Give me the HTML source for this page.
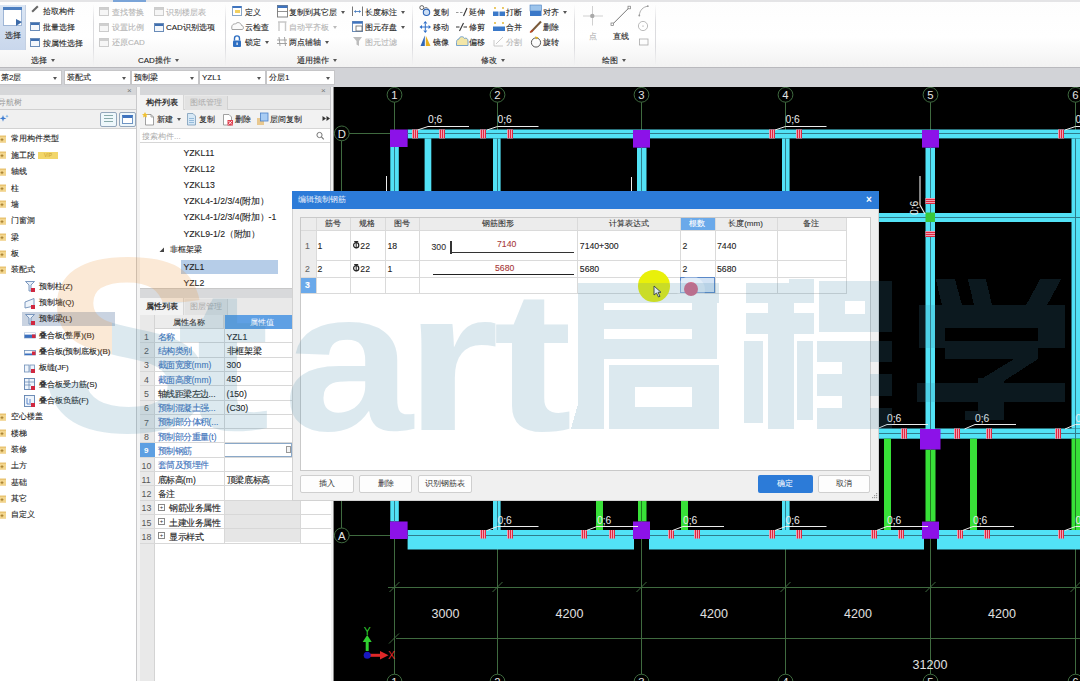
<!DOCTYPE html>
<html><head><meta charset="utf-8">
<style>
*{margin:0;padding:0;box-sizing:border-box}
html,body{width:1080px;height:681px;overflow:hidden;background:#fff}
body{position:relative;font-family:"Liberation Sans",sans-serif;font-size:8px;color:#222}
.a{position:absolute}
.t{position:absolute;white-space:nowrap;line-height:1;font-size:8px}
.g{color:#b4b4b4}
.d{-webkit-text-stroke:0.1px currentColor}
#ribbon{left:0;top:0;width:1080px;height:68px;background:linear-gradient(#fdfdfd 0%,#ffffff 55%,#f2f2f2 100%);border-bottom:1px solid #b9b9bd}
.sep{position:absolute;top:4px;width:1px;height:62px;background:linear-gradient(rgba(220,220,222,0),#dcdcdf 30%,#dcdcdf 70%,rgba(220,220,222,0))}
#tb{left:0;top:68px;width:1080px;height:19px;background:#d2d3d7}
.dd{position:absolute;top:70px;height:15px;background:#fff;border:1px solid #c6c6c8}
.dd .t{left:2px;top:3px}
.dd i{position:absolute;right:4px;top:6px;width:0;height:0;border-left:2.5px solid transparent;border-right:2.5px solid transparent;border-top:3px solid #555}
.ic{position:absolute;width:10px;height:9px;border:1px solid #6a8cb8;background:#f4f7fb}
.ic:before{content:"";position:absolute;left:0;top:0;right:0;height:2px;background:#3f6fb0}
.icg:before{background:#cfcfcf}
.c{display:inline-block;width:1em;text-align:center}
.arr{display:inline-block;width:0;height:0;border-left:2.5px solid transparent;border-right:2.5px solid transparent;border-top:3px solid #555;margin-left:4px;vertical-align:middle}
</style></head><body>

<!-- RIBBON -->
<div id="ribbon" class="a">
  <div class="a" style="left:0;top:0;width:1080px;height:1.5px;background:#e4e4e6"></div>
  <div class="a" style="left:113px;top:0;width:33px;height:1.5px;background:#7aa4d8"></div>
  <!-- select big button -->
  <div class="a" style="left:0;top:5px;width:26px;height:45px;background:linear-gradient(#dbe6f4,#c9d7ec);border-right:1px solid #c4d0e2"></div>
  <div class="a" style="left:3px;top:7px;width:19px;height:19px;background:#fff;border:1px solid #9fb6d6"></div>
  <div class="a" style="left:3px;top:7px;width:19px;height:3px;background:#4d7fc0"></div>
  <div class="a" style="left:16px;top:19px;width:0;height:0;border-left:6px solid #3c6aa8;border-top:3px solid transparent;border-bottom:4px solid transparent"></div>
  <div class="t d" style="left:5px;top:32px;font-size:8px"><span class="c">选</span><span class="c">择</span></div>
  <div class="a" style="left:31px;top:8px;width:8px;height:2px;background:#666;transform:rotate(-45deg)"></div>
  <div class="t d" style="left:43px;top:7.5px"><span class="c">拾</span><span class="c">取</span><span class="c">构</span><span class="c">件</span></div>
  <div class="ic" style="left:30px;top:22px"></div>
  <div class="t d" style="left:43px;top:23.5px"><span class="c">批</span><span class="c">量</span><span class="c">选</span><span class="c">择</span></div>
  <div class="ic" style="left:30px;top:38px"></div>
  <div class="t d" style="left:43px;top:39.5px"><span class="c">按</span><span class="c">属</span><span class="c">性</span><span class="c">选</span><span class="c">择</span></div>
  <div class="t d" style="left:31px;top:56.5px"><span class="c">选</span><span class="c">择</span><span class="arr"></span></div>
  <div class="sep" style="left:93px"></div>

  <div class="ic icg" style="left:99px;top:7px;border-color:#ccc;background:#f6f6f6"></div>
  <div class="t g d" style="left:112px;top:8.5px"><span class="c">查</span><span class="c">找</span><span class="c">替</span><span class="c">换</span></div>
  <div class="ic icg" style="left:99px;top:23px;border-color:#ccc;background:#f6f6f6"></div>
  <div class="t g d" style="left:112px;top:23.5px"><span class="c">设</span><span class="c">置</span><span class="c">比</span><span class="c">例</span></div>
  <div class="ic icg" style="left:99px;top:38px;border-color:#ccc;background:#f6f6f6"></div>
  <div class="t g d" style="left:112px;top:38.5px"><span class="c">还</span><span class="c">原</span>CAD</div>
  <div class="ic icg" style="left:154px;top:7px;border-color:#ccc;background:#f6f6f6"></div>
  <div class="t g d" style="left:166px;top:8.5px"><span class="c">识</span><span class="c">别</span><span class="c">楼</span><span class="c">层</span><span class="c">表</span></div>
  <div class="ic" style="left:154px;top:23px"></div>
  <div class="t d" style="left:166px;top:23.5px">CAD<span class="c">识</span><span class="c">别</span><span class="c">选</span><span class="c">项</span></div>
  <div class="t d" style="left:138px;top:56.5px">CAD<span class="c">操</span><span class="c">作</span><span class="arr"></span></div>
  <div class="sep" style="left:225px"></div>

  <div class="t d" style="left:245px;top:8.5px"><span class="c">定</span><span class="c">义</span></div>
  <div class="t d" style="left:245px;top:23.5px"><span class="c">云</span><span class="c">检</span><span class="c">查</span></div>
  <div class="t d" style="left:245px;top:38.5px"><span class="c">锁</span><span class="c">定</span><span class="arr"></span></div>
  <div class="t d" style="left:289px;top:8.5px"><span class="c">复</span><span class="c">制</span><span class="c">到</span><span class="c">其</span><span class="c">它</span><span class="c">层</span><span class="arr"></span></div>
  <div class="t g d" style="left:289px;top:23.5px"><span class="c">自</span><span class="c">动</span><span class="c">平</span><span class="c">齐</span><span class="c">板</span><span class="arr" style="border-top-color:#bbb"></span></div>
  <div class="t d" style="left:289px;top:38.5px"><span class="c">两</span><span class="c">点</span><span class="c">辅</span><span class="c">轴</span><span class="arr"></span></div>
  <div class="t d" style="left:365px;top:8.5px"><span class="c">长</span><span class="c">度</span><span class="c">标</span><span class="c">注</span><span class="arr"></span></div>
  <div class="t d" style="left:365px;top:23.5px"><span class="c">图</span><span class="c">元</span><span class="c">存</span><span class="c">盘</span><span class="arr"></span></div>
  <div class="t g d" style="left:365px;top:38.5px"><span class="c">图</span><span class="c">元</span><span class="c">过</span><span class="c">滤</span></div>
  <svg class="a" style="left:228px;top:0" width="140" height="50" viewBox="228 0 140 50">
    <rect x="232.5" y="6.5" width="9" height="9" fill="#fff" stroke="#8aa6c8" stroke-width="1"/>
    <rect x="232.5" y="6" width="9" height="2" fill="#3f74bf"/>
    <rect x="235" y="10" width="5" height="3" fill="#f2d060"/>
    <path d="M232 29.5 H242 C244 29.5 244 25.5 241.5 25.5 C241 22.5 237 21.5 235.5 24 C233 23.5 231 25.5 232 29.5 Z" fill="#fbfbfb" stroke="#9a9a9a" stroke-width="0.9"/>
    <path d="M234.5 40.5 V38.5 C234.5 35 239.5 35 239.5 38.5 V40.5" fill="none" stroke="#2f6fc2" stroke-width="1.4"/>
    <rect x="233" y="40.5" width="8" height="6.5" rx="1" fill="#2f6fc2"/>
    <rect x="236.5" y="42.5" width="1.2" height="2.5" fill="#fff"/>
    <rect x="277.5" y="5.5" width="10" height="11.5" fill="#fff" stroke="#777" stroke-width="0.9"/>
    <rect x="277.5" y="5.5" width="10" height="2.5" fill="#3f74bf"/>
    <path d="M277.5 11.5 H287.5" stroke="#777" stroke-width="0.8"/>
    <path d="M279 22 V31 M285.5 22 V31 M278 22 H286.5" stroke="#c8c8c8" stroke-width="1.4" fill="none"/>
    <path d="M279 37 L280 46 M284.5 37 L285.5 46 M277 40 H287 M277 43.5 H287" stroke="#999" stroke-width="0.9"/>
    <path d="M352.5 6.5 V16 M362.5 6.5 V16" stroke="#666" stroke-width="0.9"/>
    <path d="M354.5 11.5 H360.5" stroke="#4b7fc0" stroke-width="0.9"/>
    <path d="M354 11.5 L356 10 V13 Z M361 11.5 L359 10 V13 Z" fill="#4b7fc0"/>
    <rect x="352.5" y="21.5" width="10" height="10" fill="#fff" stroke="#6a8cb8" stroke-width="1"/>
    <rect x="352.5" y="21.5" width="10" height="2.2" fill="#3f74bf"/>
    <rect x="356" y="26" width="6" height="5" fill="#fff" stroke="#666" stroke-width="0.8"/>
    <path d="M353 37 H362 L359 41 V46 L356.5 44.5 V41 Z" fill="#bdbdbd"/>
  </svg>
  <div class="t d" style="left:297px;top:56.5px"><span class="c">通</span><span class="c">用</span><span class="c">操</span><span class="c">作</span><span class="arr"></span></div>
  <div class="sep" style="left:412px"></div>

  <div class="t d" style="left:433px;top:8.5px"><span class="c">复</span><span class="c">制</span></div>
  <div class="t d" style="left:433px;top:23.5px"><span class="c">移</span><span class="c">动</span></div>
  <div class="t d" style="left:433px;top:38.5px"><span class="c">镜</span><span class="c">像</span></div>
  <div class="t d" style="left:469px;top:8.5px"><span class="c">延</span><span class="c">伸</span></div>
  <div class="t d" style="left:469px;top:23.5px"><span class="c">修</span><span class="c">剪</span></div>
  <div class="t d" style="left:469px;top:38.5px"><span class="c">偏</span><span class="c">移</span></div>
  <div class="t d" style="left:506px;top:8.5px"><span class="c">打</span><span class="c">断</span></div>
  <div class="t d" style="left:506px;top:23.5px"><span class="c">合</span><span class="c">并</span></div>
  <div class="t g d" style="left:506px;top:38.5px"><span class="c">分</span><span class="c">割</span></div>
  <div class="t d" style="left:543px;top:8.5px"><span class="c">对</span><span class="c">齐</span><span class="arr"></span></div>
  <div class="t d" style="left:543px;top:23.5px"><span class="c">删</span><span class="c">除</span></div>
  <div class="t d" style="left:543px;top:38.5px"><span class="c">旋</span><span class="c">转</span></div>
  <svg class="a" style="left:415px;top:0" width="135" height="50" viewBox="415 0 135 50">
    <circle cx="421.8" cy="7.6" r="2" fill="none" stroke="#555" stroke-width="0.9"/>
    <circle cx="426.5" cy="12.3" r="3.2" fill="#cfe0f4" stroke="#2f66b8" stroke-width="1.1"/>
    <path d="M424 8.5 L426 7.2 L428.5 8.8" fill="none" stroke="#777" stroke-width="0.8"/>
    <path d="M425.3 21 L427.3 23.5 L423.3 23.5 Z M425.3 33 L427.3 30.5 L423.3 30.5 Z M419.5 27 L422 25 L422 29 Z M431 27 L428.5 25 L428.5 29 Z" fill="#2f6fc8"/>
    <path d="M425.3 23.5 V30.5 M422 27 H428.5" stroke="#2f6fc8" stroke-width="1"/>
    <path d="M424.8 35.5 L420.5 46 L424.8 46 Z" fill="#2f66b8"/>
    <path d="M425.8 35.5 L430.5 46 L425.8 46 Z" fill="#e8b020"/>
    <path d="M456 12.5 H458.5 M460 12.5 H462.5" stroke="#999" stroke-width="1"/>
    <path d="M463.5 16 L467 8" stroke="#333" stroke-width="1.1"/>
    <path d="M456 27 H459.5 M463.5 27 H467" stroke="#333" stroke-width="1"/>
    <path d="M459.5 31 L463.5 23" stroke="#333" stroke-width="1.1"/>
    <path d="M456.5 45.5 H468 V41 C468 38.5 466 37.5 464.5 38.5 C463.5 36 459.5 36 459 39 C457 39 456.5 41 456.5 42.5 Z" fill="#f2e6a8" stroke="#6a9ac8" stroke-width="0.9"/>
    <rect x="493" y="11.5" width="5.5" height="4.5" fill="#3a78c8"/><rect x="499.5" y="11.5" width="5.5" height="4.5" fill="#3a78c8"/>
    <circle cx="495" cy="8" r="0.9" fill="#e0b020"/><circle cx="503" cy="8" r="0.9" fill="#e0b020"/>
    <rect x="493" y="26.5" width="12" height="4.5" fill="#3a78c8"/>
    <circle cx="495" cy="23" r="0.9" fill="#e0b020"/><circle cx="503" cy="23" r="0.9" fill="#e0b020"/>
    <path d="M494 46 H503 M494 46 V40 M496 44 L503 37" stroke="#c4c4c4" stroke-width="0.9" fill="none"/>
    <rect x="530" y="5" width="11.5" height="6" fill="#9cc4ec" stroke="#4a7fc0" stroke-width="0.6"/>
    <rect x="530" y="11" width="11.5" height="5" fill="#3a78c8"/>
    <path d="M531 32 L541 21.5" stroke="#7a5a3a" stroke-width="2"/>
    <path d="M530 32.5 L533 30" stroke="#c04020" stroke-width="1.4"/>
    <circle cx="536" cy="42.5" r="4.6" fill="none" stroke="#444" stroke-width="0.9"/>
    <path d="M535 36.5 L538.5 37.2 L536 39.5 Z" fill="#e0b020"/>
  </svg>
  <div class="t d" style="left:481px;top:56.5px"><span class="c">修</span><span class="c">改</span><span class="arr"></span></div>
  <div class="sep" style="left:574px"></div>

  <div class="t g d" style="left:589px;top:32.5px"><span class="c">点</span></div>
  <div class="t d" style="left:613px;top:32.5px"><span class="c">直</span><span class="c">线</span></div>
  <svg class="a" style="left:575px;top:0" width="80" height="50" viewBox="575 0 80 50">
    <path d="M583 16 H603 M592.5 6 V25.5" stroke="#d0d0d0" stroke-width="1"/>
    <circle cx="592.3" cy="15.9" r="2.2" fill="#a8a8a8"/>
    <path d="M612.5 24.3 L629.3 7.5" stroke="#666" stroke-width="0.9"/>
    <rect x="611" y="23" width="2.6" height="2.6" fill="#fff" stroke="#777" stroke-width="0.7"/>
    <rect x="628" y="6.2" width="2.6" height="2.6" fill="#fff" stroke="#777" stroke-width="0.7"/>
    <path d="M639.3 15.5 C639.8 10 643 7 647.8 6.2" fill="none" stroke="#999" stroke-width="0.8"/>
    <circle cx="639.3" cy="15.5" r="0.9" fill="#999"/><circle cx="647.8" cy="6.2" r="0.9" fill="#999"/>
    <circle cx="643" cy="26" r="4.6" fill="none" stroke="#aaa" stroke-width="0.8"/>
    <circle cx="643" cy="26" r="0.6" fill="#888"/>
    <rect x="639.5" y="39" width="8.5" height="6" fill="none" stroke="#aaa" stroke-width="0.8"/>
  </svg>
  <div class="t d" style="left:602px;top:56.5px"><span class="c">绘</span><span class="c">图</span><span class="arr"></span></div>
  <div class="sep" style="left:655px"></div>
</div>

<!-- TOOLBAR -->
<div id="tb" class="a"></div>
<div class="dd" style="left:-2px;width:64px"><span class="t d"><span class="c">第</span>2<span class="c">层</span></span><i></i></div>
<div class="dd" style="left:64px;width:67px"><span class="t d"><span class="c">装</span><span class="c">配</span><span class="c">式</span></span><i></i></div>
<div class="dd" style="left:131px;width:68px"><span class="t d"><span class="c">预</span><span class="c">制</span><span class="c">梁</span></span><i></i></div>
<div class="dd" style="left:199px;width:67px"><span class="t d">YZL1</span><i></i></div>
<div class="dd" style="left:266px;width:69px"><span class="t d"><span class="c">分</span><span class="c">层</span>1</span><i></i></div>

<!-- LEFT -->
<div class="a" style="left:0;top:87px;width:137px;height:594px;background:#fff;border-right:1px solid #c9c9cb"></div>
<div class="a" style="left:0;top:87px;width:136px;height:8px;background:#d6d7d9"></div>
<div class="t" style="left:127px;top:87px;color:#777;font-size:8px">×</div>
<div class="a" style="left:0;top:95px;width:136px;height:15px;background:#efefef;border-bottom:1px solid #d0d0d0"></div>
<div class="t" style="left:-2px;top:98.5px;color:#9a9a9a"><span class="c">导</span><span class="c">航</span><span class="c">树</span></div>
<div class="a" style="left:0;top:110px;width:136px;height:19px;background:#f0f0f0;border-bottom:1px solid #d2d2d2"></div>
<svg class="a" style="left:0;top:114px" width="9" height="9" viewBox="0 0 9 9"><path d="M3 1 L3.8 3.6 L6.4 4.4 L3.8 5.2 L3 7.8 L2.2 5.2 L-0.4 4.4 L2.2 3.6 Z" fill="#3a7ad0"/><path d="M7 0.5 L7.4 1.8 L8.7 2.2 L7.4 2.6 L7 3.9 L6.6 2.6 L5.3 2.2 L6.6 1.8 Z" fill="#5aa0e0"/></svg>
<div class="a" style="left:100px;top:112px;width:17px;height:15px;border:1px solid #93a6bb;border-radius:2px;background:#eef7fb"></div>
<div class="a" style="left:104px;top:115px;width:9px;height:1px;background:#8aa;box-shadow:0 3px 0 #8aa,0 6px 0 #8aa"></div>
<div class="a" style="left:119px;top:112px;width:17px;height:15px;border:1px solid #93a6bb;border-radius:2px;background:#eef7fb"></div>
<div class="a" style="left:122px;top:115px;width:11px;height:9px;background:#fff;border:1px solid #6f95c4;border-top:3px solid #3f74bf"></div>
<svg class="a" style="left:0;top:134.0px" width="8" height="9" viewBox="0 0 8 9"><rect x="-2" y="1.5" width="8" height="7" fill="#e9c472"/><rect x="-2" y="3" width="8" height="5.5" fill="#f3d68e"/><path d="M0.5 5.7 H3.5 M2 4.2 V7.2" stroke="#9a7020" stroke-width="0.8"/></svg>
<div class="t d" style="left:10.5px;top:135.4px"><span class="c">常</span><span class="c">用</span><span class="c">构</span><span class="c">件</span><span class="c">类</span><span class="c">型</span></div>
<svg class="a" style="left:0;top:150.3px" width="8" height="9" viewBox="0 0 8 9"><rect x="-2" y="1.5" width="8" height="7" fill="#e9c472"/><rect x="-2" y="3" width="8" height="5.5" fill="#f3d68e"/><path d="M0.5 5.7 H3.5 M2 4.2 V7.2" stroke="#9a7020" stroke-width="0.8"/></svg>
<div class="t d" style="left:10.5px;top:151.8px"><span class="c">施</span><span class="c">工</span><span class="c">段</span></div>
<div class="a" style="left:38px;top:151.8px;width:20px;height:7px;background:#f2d66a;color:#c9a030;font-size:5px;line-height:7px;text-align:center">VIP</div>
<svg class="a" style="left:0;top:166.7px" width="8" height="9" viewBox="0 0 8 9"><rect x="-2" y="1.5" width="8" height="7" fill="#e9c472"/><rect x="-2" y="3" width="8" height="5.5" fill="#f3d68e"/><path d="M0.5 5.7 H3.5 M2 4.2 V7.2" stroke="#9a7020" stroke-width="0.8"/></svg>
<div class="t d" style="left:10.5px;top:168.1px"><span class="c">轴</span><span class="c">线</span></div>
<svg class="a" style="left:0;top:183.1px" width="8" height="9" viewBox="0 0 8 9"><rect x="-2" y="1.5" width="8" height="7" fill="#e9c472"/><rect x="-2" y="3" width="8" height="5.5" fill="#f3d68e"/><path d="M0.5 5.7 H3.5 M2 4.2 V7.2" stroke="#9a7020" stroke-width="0.8"/></svg>
<div class="t d" style="left:10.5px;top:184.5px"><span class="c">柱</span></div>
<svg class="a" style="left:0;top:199.4px" width="8" height="9" viewBox="0 0 8 9"><rect x="-2" y="1.5" width="8" height="7" fill="#e9c472"/><rect x="-2" y="3" width="8" height="5.5" fill="#f3d68e"/><path d="M0.5 5.7 H3.5 M2 4.2 V7.2" stroke="#9a7020" stroke-width="0.8"/></svg>
<div class="t d" style="left:10.5px;top:200.8px"><span class="c">墙</span></div>
<svg class="a" style="left:0;top:215.8px" width="8" height="9" viewBox="0 0 8 9"><rect x="-2" y="1.5" width="8" height="7" fill="#e9c472"/><rect x="-2" y="3" width="8" height="5.5" fill="#f3d68e"/><path d="M0.5 5.7 H3.5 M2 4.2 V7.2" stroke="#9a7020" stroke-width="0.8"/></svg>
<div class="t d" style="left:10.5px;top:217.2px"><span class="c">门</span><span class="c">窗</span><span class="c">洞</span></div>
<svg class="a" style="left:0;top:232.1px" width="8" height="9" viewBox="0 0 8 9"><rect x="-2" y="1.5" width="8" height="7" fill="#e9c472"/><rect x="-2" y="3" width="8" height="5.5" fill="#f3d68e"/><path d="M0.5 5.7 H3.5 M2 4.2 V7.2" stroke="#9a7020" stroke-width="0.8"/></svg>
<div class="t d" style="left:10.5px;top:233.5px"><span class="c">梁</span></div>
<svg class="a" style="left:0;top:248.5px" width="8" height="9" viewBox="0 0 8 9"><rect x="-2" y="1.5" width="8" height="7" fill="#e9c472"/><rect x="-2" y="3" width="8" height="5.5" fill="#f3d68e"/><path d="M0.5 5.7 H3.5 M2 4.2 V7.2" stroke="#9a7020" stroke-width="0.8"/></svg>
<div class="t d" style="left:10.5px;top:249.9px"><span class="c">板</span></div>
<svg class="a" style="left:0;top:264.8px" width="8" height="9" viewBox="0 0 8 9"><rect x="-2" y="1.5" width="8" height="7" fill="#e9c472"/><rect x="-2" y="3" width="8" height="5.5" fill="#f3d68e"/><path d="M0.5 5.7 H3.5 M2 4.2 V7.2" stroke="#9a7020" stroke-width="0.8"/></svg>
<div class="t d" style="left:10.5px;top:266.2px"><span class="c">装</span><span class="c">配</span><span class="c">式</span></div>
<svg class="a" style="left:23.5px;top:280.1px" width="12" height="12" viewBox="0 0 12 12"><path d="M1.5 1.5 H10.5 L7 5 V11 H5 V5 Z" fill="#e6eef8" stroke="#6f8fb8" stroke-width="0.9"/><rect x="7" y="8" width="4" height="4" fill="#d02840"/></svg>
<div class="t d" style="left:38.5px;top:282.5px"><span class="c">预</span><span class="c">制</span><span class="c">柱</span>(Z)</div>
<svg class="a" style="left:23.5px;top:296.5px" width="12" height="12" viewBox="0 0 12 12"><path d="M1 5 L10 1.5 V9 L1 11 Z" fill="#eef4fb" stroke="#6f8fb8" stroke-width="0.9"/><rect x="7" y="8" width="4" height="4" fill="#d02840"/></svg>
<div class="t d" style="left:38.5px;top:298.9px"><span class="c">预</span><span class="c">制</span><span class="c">墙</span>(Q)</div>
<div class="a" style="left:22px;top:311.5px;width:93px;height:14px;background:#c9d3e1"></div>
<svg class="a" style="left:23.5px;top:312.9px" width="12" height="12" viewBox="0 0 12 12"><path d="M1.5 1.5 H10.5 L7 5 V11 H5 V5 Z" fill="#e6eef8" stroke="#6f8fb8" stroke-width="0.9"/><rect x="7" y="8" width="4" height="4" fill="#d02840"/></svg>
<div class="t d" style="left:38.5px;top:315.2px"><span class="c">预</span><span class="c">制</span><span class="c">梁</span>(L)</div>
<svg class="a" style="left:23.5px;top:329.2px" width="12" height="12" viewBox="0 0 12 12"><rect x="0.5" y="4" width="11" height="5" fill="#3a70c0" stroke="#6f8fb8" stroke-width="0.6"/><rect x="0.5" y="4" width="11" height="1.6" fill="#fff"/><rect x="8" y="5.5" width="3.5" height="3.5" fill="#d02840"/></svg>
<div class="t d" style="left:38.5px;top:331.6px"><span class="c">叠</span><span class="c">合</span><span class="c">板</span>(<span class="c">整</span><span class="c">厚</span>)(B)</div>
<svg class="a" style="left:23.5px;top:345.6px" width="12" height="12" viewBox="0 0 12 12"><rect x="0.5" y="4.5" width="11" height="4.5" fill="#f4f7fb" stroke="#6f8fb8" stroke-width="0.8"/><rect x="1" y="7.5" width="10" height="1.5" fill="#3a70c0"/><rect x="8" y="5.5" width="3.5" height="3.5" fill="#d02840"/></svg>
<div class="t d" style="left:38.5px;top:347.9px"><span class="c">叠</span><span class="c">合</span><span class="c">板</span>(<span class="c">预</span><span class="c">制</span><span class="c">底</span><span class="c">板</span>)(B)</div>
<svg class="a" style="left:23.5px;top:361.9px" width="12" height="12" viewBox="0 0 12 12"><rect x="0.5" y="3" width="4.5" height="7" fill="#eef4fb" stroke="#6f8fb8" stroke-width="0.8"/><rect x="6" y="3" width="4.5" height="7" fill="#eef4fb" stroke="#6f8fb8" stroke-width="0.8"/><rect x="7" y="7" width="4" height="4" fill="#d02840"/></svg>
<div class="t d" style="left:38.5px;top:364.3px"><span class="c">板</span><span class="c">缝</span>(JF)</div>
<svg class="a" style="left:23.5px;top:378.2px" width="12" height="12" viewBox="0 0 12 12"><rect x="0.5" y="0.5" width="10" height="11" fill="#eef4fb" stroke="#5f82b0" stroke-width="0.9"/><path d="M1 4 H10 M1 7 H7 M5 1 V11" stroke="#5f82b0" stroke-width="0.7"/><rect x="7" y="8" width="4" height="4" fill="#d02840"/></svg>
<div class="t d" style="left:38.5px;top:380.6px"><span class="c">叠</span><span class="c">合</span><span class="c">板</span><span class="c">受</span><span class="c">力</span><span class="c">筋</span>(S)</div>
<svg class="a" style="left:23.5px;top:394.6px" width="12" height="12" viewBox="0 0 12 12"><rect x="0.5" y="0.5" width="10" height="11" fill="#eef4fb" stroke="#5f82b0" stroke-width="0.9"/><path d="M3 3 V9 M3 9 H8 M6 4 V8" stroke="#3a70c0" stroke-width="0.8"/><rect x="7" y="8" width="4" height="4" fill="#d02840"/></svg>
<div class="t d" style="left:38.5px;top:397.0px"><span class="c">叠</span><span class="c">合</span><span class="c">板</span><span class="c">负</span><span class="c">筋</span>(F)</div>
<svg class="a" style="left:0;top:412.0px" width="8" height="9" viewBox="0 0 8 9"><rect x="-2" y="1.5" width="8" height="7" fill="#e9c472"/><rect x="-2" y="3" width="8" height="5.5" fill="#f3d68e"/><path d="M0.5 5.7 H3.5 M2 4.2 V7.2" stroke="#9a7020" stroke-width="0.8"/></svg>
<div class="t d" style="left:10.5px;top:413.4px"><span class="c">空</span><span class="c">心</span><span class="c">楼</span><span class="c">盖</span></div>
<svg class="a" style="left:0;top:428.3px" width="8" height="9" viewBox="0 0 8 9"><rect x="-2" y="1.5" width="8" height="7" fill="#e9c472"/><rect x="-2" y="3" width="8" height="5.5" fill="#f3d68e"/><path d="M0.5 5.7 H3.5 M2 4.2 V7.2" stroke="#9a7020" stroke-width="0.8"/></svg>
<div class="t d" style="left:10.5px;top:429.7px"><span class="c">楼</span><span class="c">梯</span></div>
<svg class="a" style="left:0;top:444.7px" width="8" height="9" viewBox="0 0 8 9"><rect x="-2" y="1.5" width="8" height="7" fill="#e9c472"/><rect x="-2" y="3" width="8" height="5.5" fill="#f3d68e"/><path d="M0.5 5.7 H3.5 M2 4.2 V7.2" stroke="#9a7020" stroke-width="0.8"/></svg>
<div class="t d" style="left:10.5px;top:446.1px"><span class="c">装</span><span class="c">修</span></div>
<svg class="a" style="left:0;top:461.0px" width="8" height="9" viewBox="0 0 8 9"><rect x="-2" y="1.5" width="8" height="7" fill="#e9c472"/><rect x="-2" y="3" width="8" height="5.5" fill="#f3d68e"/><path d="M0.5 5.7 H3.5 M2 4.2 V7.2" stroke="#9a7020" stroke-width="0.8"/></svg>
<div class="t d" style="left:10.5px;top:462.4px"><span class="c">土</span><span class="c">方</span></div>
<svg class="a" style="left:0;top:477.4px" width="8" height="9" viewBox="0 0 8 9"><rect x="-2" y="1.5" width="8" height="7" fill="#e9c472"/><rect x="-2" y="3" width="8" height="5.5" fill="#f3d68e"/><path d="M0.5 5.7 H3.5 M2 4.2 V7.2" stroke="#9a7020" stroke-width="0.8"/></svg>
<div class="t d" style="left:10.5px;top:478.8px"><span class="c">基</span><span class="c">础</span></div>
<svg class="a" style="left:0;top:493.7px" width="8" height="9" viewBox="0 0 8 9"><rect x="-2" y="1.5" width="8" height="7" fill="#e9c472"/><rect x="-2" y="3" width="8" height="5.5" fill="#f3d68e"/><path d="M0.5 5.7 H3.5 M2 4.2 V7.2" stroke="#9a7020" stroke-width="0.8"/></svg>
<div class="t d" style="left:10.5px;top:495.1px"><span class="c">其</span><span class="c">它</span></div>
<svg class="a" style="left:0;top:510.0px" width="8" height="9" viewBox="0 0 8 9"><rect x="-2" y="1.5" width="8" height="7" fill="#e9c472"/><rect x="-2" y="3" width="8" height="5.5" fill="#f3d68e"/><path d="M0.5 5.7 H3.5 M2 4.2 V7.2" stroke="#9a7020" stroke-width="0.8"/></svg>
<div class="t d" style="left:10.5px;top:511.4px"><span class="c">自</span><span class="c">定</span><span class="c">义</span></div>
<!-- MIDDLE -->
<div class="a" style="left:137px;top:87px;width:3px;height:594px;background:#f4f4f4"></div>
<div class="a" style="left:140px;top:87px;width:191px;height:594px;background:#fff;border-right:1px solid #c6c6c8"></div>
<div class="a" style="left:331px;top:87px;width:2px;height:594px;background:#f2f2f2"></div>
<div class="a" style="left:140px;top:87px;width:190px;height:8px;background:#d6d7d9"></div>
<div class="t" style="left:321px;top:87px;color:#777;font-size:8px">×</div>
<div class="a" style="left:140px;top:95px;width:190px;height:15px;background:#e9e9e9;border-bottom:1px solid #d0d0d0"></div>
<div class="a" style="left:140px;top:95px;width:44px;height:15px;background:#f3f3f3;border-right:1px solid #d6d6d6"></div>
<div class="t" style="left:146px;top:99px;font-weight:bold;color:#333"><span class="c">构</span><span class="c">件</span><span class="c">列</span><span class="c">表</span></div>
<div class="a" style="left:185px;top:96px;width:43px;height:14px;background:#e2e2e2;border-right:1px solid #d2d2d2"></div>
<div class="t" style="left:190px;top:99px;color:#aaa"><span class="c">图</span><span class="c">纸</span><span class="c">管</span><span class="c">理</span></div>
<div class="a" style="left:140px;top:110px;width:190px;height:19px;background:#f2f2f2;border-bottom:1px solid #d6d6d6"></div>
<svg class="a" style="left:140px;top:108px" width="195" height="37" viewBox="140 108 195 37">
<path d="M145.5 114.5 H151 L153.5 117 V125 H145.5 Z" fill="#fff" stroke="#8a8a8a" stroke-width="0.8"/>
<path d="M151 114.5 V117 H153.5" fill="none" stroke="#8a8a8a" stroke-width="0.7"/>
<path d="M145 112 L146 114 L148 114.3 L146.4 115.6 L147 117.6 L145 116.5 L143 117.6 L143.6 115.6 L142 114.3 L144 114 Z" fill="#f0c030"/>
<path d="M187.5 113.5 H193 L195.5 116 V125 H187.5 Z" fill="#d6e8f6" stroke="#7a9ab8" stroke-width="0.8"/>
<path d="M189 118.5 H194 M189 120.5 H194 M189 122.5 H194" stroke="#6a9ac8" stroke-width="0.6"/>
<path d="M223.5 114.5 H229 L231.5 117 V125 H223.5 Z" fill="#fff" stroke="#8a8a8a" stroke-width="0.8"/>
<rect x="227.5" y="120" width="5.5" height="5.5" fill="#e04050"/>
<path d="M228.5 121 L232 124.5 M232 121 L228.5 124.5" stroke="#fff" stroke-width="0.8"/>
<rect x="257" y="118" width="7" height="7" fill="#e8c890"/>
<rect x="260.5" y="113" width="7.5" height="8" fill="#a8ccf4" stroke="#4a80c8" stroke-width="0.8"/>
<path d="M322.5 116 L326 118.5 L322.5 121 Z M326.5 116 L330 118.5 L326.5 121 Z" fill="#333"/>
</svg>
<div class="t d" style="left:157px;top:116px"><span class="c">新</span><span class="c">建</span><span class="arr"></span></div>
<div class="t d" style="left:199px;top:116px"><span class="c">复</span><span class="c">制</span></div>
<div class="t d" style="left:235px;top:116px"><span class="c">删</span><span class="c">除</span></div>
<div class="t d" style="left:270px;top:116px"><span class="c">层</span><span class="c">间</span><span class="c">复</span><span class="c">制</span></div>
<div class="a" style="left:140px;top:129px;width:190px;height:14px;background:#fff;border-bottom:1px solid #d6d6d6"></div>
<div class="t" style="left:142px;top:132.5px;color:#aaa"><span class="c">搜</span><span class="c">索</span><span class="c">构</span><span class="c">件</span>...</div>
<svg class="a" style="left:314px;top:130px" width="12" height="12" viewBox="314 130 12 12"><circle cx="319.5" cy="135" r="2.6" fill="none" stroke="#777" stroke-width="1"/><path d="M321.4 136.9 L323.8 139.3" stroke="#777" stroke-width="1.2"/></svg>
<div class="t d" style="left:183.5px;top:148.5px;font-size:8.7px">YZKL11</div>
<div class="t d" style="left:183.5px;top:164.7px;font-size:8.7px">YZKL12</div>
<div class="t d" style="left:183.5px;top:180.9px;font-size:8.7px">YZKL13</div>
<div class="t d" style="left:183.5px;top:197.1px;font-size:8.7px">YZKL4-1/2/3/4(<span class="c">附</span><span class="c">加</span><span class="c">）</span></div>
<div class="t d" style="left:183.5px;top:213.3px;font-size:8.7px">YZKL4-1/2/3/4(<span class="c">附</span><span class="c">加</span><span class="c">）</span>-1</div>
<div class="t d" style="left:183.5px;top:229.5px;font-size:8.7px">YZKL9-1/2<span class="c">（</span><span class="c">附</span><span class="c">加</span><span class="c">）</span></div>
<svg class="a" style="left:159px;top:247px" width="6" height="6" viewBox="0 0 6 6"><path d="M5 0.5 V5 H0.5 Z" fill="#444"/></svg>
<div class="t d" style="left:170px;top:246.3px"><span class="c">非</span><span class="c">框</span><span class="c">架</span><span class="c">梁</span></div>
<div class="a" style="left:181px;top:260px;width:97px;height:14px;background:#b6cde8"></div>
<div class="t d" style="left:183.5px;top:262.9px;font-size:8.7px">YZL1</div>
<div class="t d" style="left:183.5px;top:278.9px;font-size:8.7px">YZL2</div>
<div class="a" style="left:140px;top:288px;width:190px;height:10px;background:#d8d9db;border-top:1px solid #c8c8c8"></div>
<div class="a" style="left:140px;top:298px;width:190px;height:17px;background:#e9e9e9"></div>
<div class="a" style="left:140px;top:298px;width:44px;height:17px;background:#f3f3f3;border-right:1px solid #d6d6d6"></div>
<div class="t" style="left:146px;top:303px;font-weight:bold;color:#333"><span class="c">属</span><span class="c">性</span><span class="c">列</span><span class="c">表</span></div>
<div class="a" style="left:185px;top:299px;width:43px;height:16px;background:#e2e2e2;border-right:1px solid #d2d2d2"></div>
<div class="t" style="left:190px;top:303px;color:#aaa"><span class="c">图</span><span class="c">层</span><span class="c">管</span><span class="c">理</span></div>
<div class="a" style="left:140px;top:315px;width:191px;height:366px;background:#fff"></div>
<div class="a" style="left:140px;top:315px;width:15px;height:366px;background:#e9e9e9;border-right:1px solid #d4d4d4"></div>
<div class="a" style="left:155px;top:315px;width:69px;height:14px;background:#ececec;border-bottom:1px solid #d4d4d4;border-right:1px solid #d4d4d4"></div>
<div class="t d" style="left:173px;top:318.5px;color:#333"><span class="c">属</span><span class="c">性</span><span class="c">名</span><span class="c">称</span></div>
<div class="a" style="left:224px;top:315px;width:76px;height:14px;background:#5fa0e4"></div>
<div class="t" style="left:250px;top:318.5px;color:#fff"><span class="c">属</span><span class="c">性</span><span class="c">值</span></div>
<div class="a" style="left:140px;top:342.30px;width:191px;height:1px;background:#d8d8d8"></div>
<div class="t" style="left:144px;top:332.80px;color:#555;font-size:8.8px">1</div>
<div class="t d" style="left:157.5px;top:332.60px;color:#3d72bb;font-size:8.5px"><span class="c">名</span><span class="c">称</span></div>
<div class="t d" style="left:226.5px;top:332.50px;color:#222;font-size:8.7px">YZL1</div>
<div class="a" style="left:140px;top:356.60px;width:191px;height:1px;background:#d8d8d8"></div>
<div class="t" style="left:144px;top:347.10px;color:#555;font-size:8.8px">2</div>
<div class="t d" style="left:157.5px;top:346.90px;color:#3d72bb;font-size:8.5px"><span class="c">结</span><span class="c">构</span><span class="c">类</span><span class="c">别</span></div>
<div class="t d" style="left:226.5px;top:346.80px;color:#222;font-size:8.7px"><span class="c">非</span><span class="c">框</span><span class="c">架</span><span class="c">梁</span></div>
<div class="a" style="left:140px;top:370.90px;width:191px;height:1px;background:#d8d8d8"></div>
<div class="t" style="left:144px;top:361.40px;color:#555;font-size:8.8px">3</div>
<div class="t d" style="left:157.5px;top:361.20px;color:#3d72bb;font-size:8.5px"><span class="c">截</span><span class="c">面</span><span class="c">宽</span><span class="c">度</span>(mm)</div>
<div class="t d" style="left:226.5px;top:361.10px;color:#222;font-size:8.7px">300</div>
<div class="a" style="left:140px;top:385.20px;width:191px;height:1px;background:#d8d8d8"></div>
<div class="t" style="left:144px;top:375.70px;color:#555;font-size:8.8px">4</div>
<div class="t d" style="left:157.5px;top:375.50px;color:#3d72bb;font-size:8.5px"><span class="c">截</span><span class="c">面</span><span class="c">高</span><span class="c">度</span>(mm)</div>
<div class="t d" style="left:226.5px;top:375.40px;color:#222;font-size:8.7px">450</div>
<div class="a" style="left:140px;top:399.50px;width:191px;height:1px;background:#d8d8d8"></div>
<div class="t" style="left:144px;top:390.00px;color:#555;font-size:8.8px">5</div>
<div class="t d" style="left:157.5px;top:389.80px;color:#222;font-size:8.5px"><span class="c">轴</span><span class="c">线</span><span class="c">距</span><span class="c">梁</span><span class="c">左</span><span class="c">边</span>...</div>
<div class="t d" style="left:226.5px;top:389.70px;color:#222;font-size:8.7px">(150)</div>
<div class="a" style="left:140px;top:413.80px;width:191px;height:1px;background:#d8d8d8"></div>
<div class="t" style="left:144px;top:404.30px;color:#555;font-size:8.8px">6</div>
<div class="t d" style="left:157.5px;top:404.10px;color:#3d72bb;font-size:8.5px"><span class="c">预</span><span class="c">制</span><span class="c">混</span><span class="c">凝</span><span class="c">土</span><span class="c">强</span>...</div>
<div class="t d" style="left:226.5px;top:404.00px;color:#222;font-size:8.7px">(C30)</div>
<div class="a" style="left:140px;top:428.10px;width:191px;height:1px;background:#d8d8d8"></div>
<div class="t" style="left:144px;top:418.60px;color:#555;font-size:8.8px">7</div>
<div class="t d" style="left:157.5px;top:418.40px;color:#3d72bb;font-size:8.5px"><span class="c">预</span><span class="c">制</span><span class="c">部</span><span class="c">分</span><span class="c">体</span><span class="c">积</span>(...</div>
<div class="a" style="left:140px;top:442.40px;width:191px;height:1px;background:#d8d8d8"></div>
<div class="t" style="left:144px;top:432.90px;color:#555;font-size:8.8px">8</div>
<div class="t d" style="left:157.5px;top:432.70px;color:#3d72bb;font-size:8.5px"><span class="c">预</span><span class="c">制</span><span class="c">部</span><span class="c">分</span><span class="c">重</span><span class="c">量</span>(t)</div>
<div class="a" style="left:140px;top:456.70px;width:191px;height:1px;background:#d8d8d8"></div>
<div class="a" style="left:140px;top:443.40px;width:15px;height:13.30px;background:#5d9fe2"></div>
<div class="t" style="left:144px;top:447.20px;color:#fff;font-weight:bold">9</div>
<div class="a" style="left:224px;top:443.40px;width:68px;height:13.30px;border:1px solid #8aa8c8"></div>
<div class="a" style="left:286px;top:446.40px;width:5px;height:7px;border:1px solid #999;background:#f4f4f4"></div>
<div class="t d" style="left:157.5px;top:447.00px;color:#3d72bb;font-size:8.5px"><span class="c">预</span><span class="c">制</span><span class="c">钢</span><span class="c">筋</span></div>
<div class="a" style="left:140px;top:471.00px;width:191px;height:1px;background:#d8d8d8"></div>
<div class="t" style="left:141.5px;top:461.50px;color:#555;font-size:8.8px">10</div>
<div class="t d" style="left:157.5px;top:461.30px;color:#3d72bb;font-size:8.5px"><span class="c">套</span><span class="c">筒</span><span class="c">及</span><span class="c">预</span><span class="c">埋</span><span class="c">件</span></div>
<div class="a" style="left:140px;top:485.30px;width:191px;height:1px;background:#d8d8d8"></div>
<div class="t" style="left:141.5px;top:475.80px;color:#555;font-size:8.8px">11</div>
<div class="t d" style="left:157.5px;top:475.60px;color:#222;font-size:8.5px"><span class="c">底</span><span class="c">标</span><span class="c">高</span>(m)</div>
<div class="t d" style="left:226.5px;top:475.50px;color:#222;font-size:8.7px"><span class="c">顶</span><span class="c">梁</span><span class="c">底</span><span class="c">标</span><span class="c">高</span></div>
<div class="a" style="left:140px;top:499.60px;width:191px;height:1px;background:#d8d8d8"></div>
<div class="t" style="left:141.5px;top:490.10px;color:#555;font-size:8.8px">12</div>
<div class="t d" style="left:157.5px;top:489.90px;color:#222;font-size:8.5px"><span class="c">备</span><span class="c">注</span></div>
<div class="a" style="left:140px;top:513.90px;width:191px;height:1px;background:#d8d8d8"></div>
<div class="t" style="left:141.5px;top:504.40px;color:#555;font-size:8.8px">13</div>
<div class="a" style="left:224px;top:500.60px;width:76px;height:13.30px;background:#e6e6e6"></div>
<div class="a" style="left:158px;top:503.60px;width:7px;height:7px;border:1px solid #888;background:#fff;font-size:6px;line-height:5px;text-align:center;color:#333">+</div>
<div class="t d" style="left:169px;top:504.20px;color:#222;font-size:8.5px"><span class="c">钢</span><span class="c">筋</span><span class="c">业</span><span class="c">务</span><span class="c">属</span><span class="c">性</span></div>
<div class="a" style="left:140px;top:528.20px;width:191px;height:1px;background:#d8d8d8"></div>
<div class="t" style="left:141.5px;top:518.70px;color:#555;font-size:8.8px">15</div>
<div class="a" style="left:224px;top:514.90px;width:76px;height:13.30px;background:#e6e6e6"></div>
<div class="a" style="left:158px;top:517.90px;width:7px;height:7px;border:1px solid #888;background:#fff;font-size:6px;line-height:5px;text-align:center;color:#333">+</div>
<div class="t d" style="left:169px;top:518.50px;color:#222;font-size:8.5px"><span class="c">土</span><span class="c">建</span><span class="c">业</span><span class="c">务</span><span class="c">属</span><span class="c">性</span></div>
<div class="a" style="left:140px;top:542.50px;width:191px;height:1px;background:#d8d8d8"></div>
<div class="t" style="left:141.5px;top:533.00px;color:#555;font-size:8.8px">18</div>
<div class="a" style="left:224px;top:529.20px;width:76px;height:13.30px;background:#e6e6e6"></div>
<div class="a" style="left:158px;top:532.20px;width:7px;height:7px;border:1px solid #888;background:#fff;font-size:6px;line-height:5px;text-align:center;color:#333">+</div>
<div class="t d" style="left:169px;top:532.80px;color:#222;font-size:8.5px"><span class="c">显</span><span class="c">示</span><span class="c">样</span><span class="c">式</span></div>
<div class="a" style="left:224px;top:315px;width:1px;height:228px;background:#d8d8d8"></div>
<div class="a" style="left:300px;top:315px;width:1px;height:228px;background:#d8d8d8"></div>
<!-- CANVAS -->
<svg class="a" style="left:333px;top:87px" width="747" height="594" viewBox="333 87 747 594">
<rect x="333" y="87" width="747.00" height="594.00" fill="#000"/>
<line x1="333.5" y1="87" x2="333.5" y2="681" stroke="#8a8a8a" stroke-width="1"/>
<line x1="394.5" y1="87" x2="394.5" y2="681" stroke="#3f6a3f" stroke-width="1"/>
<line x1="497.5" y1="87" x2="497.5" y2="681" stroke="#3f6a3f" stroke-width="1"/>
<line x1="641.5" y1="87" x2="641.5" y2="681" stroke="#3f6a3f" stroke-width="1"/>
<line x1="785.5" y1="87" x2="785.5" y2="681" stroke="#3f6a3f" stroke-width="1"/>
<line x1="930.5" y1="87" x2="930.5" y2="681" stroke="#3f6a3f" stroke-width="1"/>
<line x1="1075.5" y1="87" x2="1075.5" y2="681" stroke="#3f6a3f" stroke-width="1"/>
<line x1="334" y1="133.5" x2="1080" y2="133.5" stroke="#3f6a3f" stroke-width="1"/>
<line x1="334" y1="217.5" x2="1080" y2="217.5" stroke="#3f6a3f" stroke-width="1"/>
<line x1="334" y1="433.5" x2="1080" y2="433.5" stroke="#3f6a3f" stroke-width="1"/>
<line x1="334" y1="535.5" x2="1080" y2="535.5" stroke="#3f6a3f" stroke-width="1"/>
<line x1="341.5" y1="133.5" x2="341.5" y2="535.5" stroke="#3f6a3f" stroke-width="1"/>
<rect x="407.6" y="129.5" width="672.40" height="8.90" fill="#52e2f6"/>
<rect x="879" y="213" width="201.00" height="9.00" fill="#52e2f6"/>
<rect x="879" y="428.5" width="201.00" height="10.20" fill="#52e2f6"/>
<rect x="407.6" y="530" width="226.40" height="19.50" fill="#52e2f6"/>
<rect x="649" y="530" width="275.00" height="19.50" fill="#52e2f6"/>
<rect x="937" y="530" width="143.00" height="19.50" fill="#52e2f6"/>
<rect x="390.3" y="147" width="8.50" height="374.50" fill="#52e2f6"/>
<rect x="424.6" y="138.4" width="6.70" height="74.60" fill="#52e2f6"/>
<rect x="493" y="138.4" width="7.60" height="391.60" fill="#52e2f6"/>
<rect x="637" y="147.6" width="9.50" height="352.40" fill="#52e2f6"/>
<rect x="782" y="138.4" width="7.60" height="391.60" fill="#52e2f6"/>
<rect x="925.5" y="147.6" width="9.50" height="281.40" fill="#52e2f6"/>
<rect x="1071.5" y="138.4" width="8.50" height="290.10" fill="#52e2f6"/>
<rect x="596" y="438.7" width="7.00" height="91.30" fill="#38e038"/>
<rect x="638" y="449.5" width="8.50" height="72.00" fill="#38e038"/>
<rect x="681" y="438.7" width="7.00" height="91.30" fill="#38e038"/>
<rect x="884" y="438.7" width="7.00" height="91.30" fill="#38e038"/>
<rect x="925.5" y="449.5" width="10.00" height="72.10" fill="#38e038"/>
<rect x="970" y="438.7" width="7.00" height="91.30" fill="#38e038"/>
<rect x="1071.5" y="438.7" width="8.50" height="91.30" fill="#38e038"/>
<line x1="407.6" y1="133.5" x2="1080" y2="133.5" stroke="#2f7d8c" stroke-width="1"/>
<line x1="879" y1="217.5" x2="1080" y2="217.5" stroke="#2f7d8c" stroke-width="1"/>
<line x1="879" y1="433.5" x2="1080" y2="433.5" stroke="#2f7d8c" stroke-width="1"/>
<line x1="407.6" y1="535.5" x2="1080" y2="535.5" stroke="#2f7d8c" stroke-width="1"/>
<line x1="394.5" y1="147" x2="394.5" y2="521.5" stroke="#2f7d8c" stroke-width="1"/>
<line x1="497.5" y1="138.4" x2="497.5" y2="530" stroke="#2f7d8c" stroke-width="1"/>
<line x1="641.5" y1="147.6" x2="641.5" y2="500" stroke="#2f7d8c" stroke-width="1"/>
<line x1="785.5" y1="138.4" x2="785.5" y2="530" stroke="#2f7d8c" stroke-width="1"/>
<line x1="930.5" y1="147.6" x2="930.5" y2="429" stroke="#2f7d8c" stroke-width="1"/>
<line x1="1075.5" y1="138.4" x2="1075.5" y2="438.7" stroke="#2f7d8c" stroke-width="1"/>
<line x1="641.5" y1="500" x2="641.5" y2="521.5" stroke="#207a20" stroke-width="1"/>
<line x1="930.5" y1="449.5" x2="930.5" y2="521.6" stroke="#207a20" stroke-width="1"/>
<line x1="1075.5" y1="438.7" x2="1075.5" y2="530" stroke="#207a20" stroke-width="1"/>
<rect x="390" y="129.5" width="17.60" height="17.50" fill="#8c12e8"/>
<rect x="633" y="130" width="17.00" height="17.60" fill="#8c12e8"/>
<rect x="922" y="130" width="17.00" height="17.60" fill="#8c12e8"/>
<rect x="920" y="429" width="20.50" height="20.50" fill="#8c12e8"/>
<rect x="390" y="521.5" width="17.60" height="17.50" fill="#8c12e8"/>
<rect x="633" y="521.5" width="17.00" height="17.50" fill="#8c12e8"/>
<rect x="922" y="521.6" width="17.00" height="17.20" fill="#8c12e8"/>
<rect x="925.5" y="212.5" width="9.50" height="9.50" fill="#3ac83a"/>
<rect x="412" y="129.5" width="6.00" height="8.90" fill="#f0a0b4"/>
<line x1="413.5" y1="129.5" x2="413.5" y2="138.4" stroke="#e02840" stroke-width="1"/>
<line x1="415.5" y1="129.5" x2="415.5" y2="138.4" stroke="#e02840" stroke-width="1"/>
<line x1="417.5" y1="129.5" x2="417.5" y2="138.4" stroke="#e02840" stroke-width="1"/>
<rect x="439" y="129.5" width="6.00" height="8.90" fill="#f0a0b4"/>
<line x1="440.5" y1="129.5" x2="440.5" y2="138.4" stroke="#e02840" stroke-width="1"/>
<line x1="442.5" y1="129.5" x2="442.5" y2="138.4" stroke="#e02840" stroke-width="1"/>
<line x1="444.5" y1="129.5" x2="444.5" y2="138.4" stroke="#e02840" stroke-width="1"/>
<rect x="480" y="129.5" width="6.00" height="8.90" fill="#f0a0b4"/>
<line x1="481.5" y1="129.5" x2="481.5" y2="138.4" stroke="#e02840" stroke-width="1"/>
<line x1="483.5" y1="129.5" x2="483.5" y2="138.4" stroke="#e02840" stroke-width="1"/>
<line x1="485.5" y1="129.5" x2="485.5" y2="138.4" stroke="#e02840" stroke-width="1"/>
<rect x="507" y="129.5" width="6.00" height="8.90" fill="#f0a0b4"/>
<line x1="508.5" y1="129.5" x2="508.5" y2="138.4" stroke="#e02840" stroke-width="1"/>
<line x1="510.5" y1="129.5" x2="510.5" y2="138.4" stroke="#e02840" stroke-width="1"/>
<line x1="512.5" y1="129.5" x2="512.5" y2="138.4" stroke="#e02840" stroke-width="1"/>
<rect x="769" y="129.5" width="6.00" height="8.90" fill="#f0a0b4"/>
<line x1="770.5" y1="129.5" x2="770.5" y2="138.4" stroke="#e02840" stroke-width="1"/>
<line x1="772.5" y1="129.5" x2="772.5" y2="138.4" stroke="#e02840" stroke-width="1"/>
<line x1="774.5" y1="129.5" x2="774.5" y2="138.4" stroke="#e02840" stroke-width="1"/>
<rect x="796" y="129.5" width="6.00" height="8.90" fill="#f0a0b4"/>
<line x1="797.5" y1="129.5" x2="797.5" y2="138.4" stroke="#e02840" stroke-width="1"/>
<line x1="799.5" y1="129.5" x2="799.5" y2="138.4" stroke="#e02840" stroke-width="1"/>
<line x1="801.5" y1="129.5" x2="801.5" y2="138.4" stroke="#e02840" stroke-width="1"/>
<rect x="1058" y="129.5" width="6.00" height="8.90" fill="#f0a0b4"/>
<line x1="1059.5" y1="129.5" x2="1059.5" y2="138.4" stroke="#e02840" stroke-width="1"/>
<line x1="1061.5" y1="129.5" x2="1061.5" y2="138.4" stroke="#e02840" stroke-width="1"/>
<line x1="1063.5" y1="129.5" x2="1063.5" y2="138.4" stroke="#e02840" stroke-width="1"/>
<rect x="901" y="428.5" width="6.00" height="10.20" fill="#f0a0b4"/>
<line x1="902.5" y1="428.5" x2="902.5" y2="438.7" stroke="#e02840" stroke-width="1"/>
<line x1="904.5" y1="428.5" x2="904.5" y2="438.7" stroke="#e02840" stroke-width="1"/>
<line x1="906.5" y1="428.5" x2="906.5" y2="438.7" stroke="#e02840" stroke-width="1"/>
<rect x="954" y="428.5" width="6.00" height="10.20" fill="#f0a0b4"/>
<line x1="955.5" y1="428.5" x2="955.5" y2="438.7" stroke="#e02840" stroke-width="1"/>
<line x1="957.5" y1="428.5" x2="957.5" y2="438.7" stroke="#e02840" stroke-width="1"/>
<line x1="959.5" y1="428.5" x2="959.5" y2="438.7" stroke="#e02840" stroke-width="1"/>
<rect x="986" y="428.5" width="6.00" height="10.20" fill="#f0a0b4"/>
<line x1="987.5" y1="428.5" x2="987.5" y2="438.7" stroke="#e02840" stroke-width="1"/>
<line x1="989.5" y1="428.5" x2="989.5" y2="438.7" stroke="#e02840" stroke-width="1"/>
<line x1="991.5" y1="428.5" x2="991.5" y2="438.7" stroke="#e02840" stroke-width="1"/>
<rect x="1055" y="428.5" width="6.00" height="10.20" fill="#f0a0b4"/>
<line x1="1056.5" y1="428.5" x2="1056.5" y2="438.7" stroke="#e02840" stroke-width="1"/>
<line x1="1058.5" y1="428.5" x2="1058.5" y2="438.7" stroke="#e02840" stroke-width="1"/>
<line x1="1060.5" y1="428.5" x2="1060.5" y2="438.7" stroke="#e02840" stroke-width="1"/>
<rect x="480" y="530" width="6.00" height="8.50" fill="#f0a0b4"/>
<line x1="481.5" y1="530" x2="481.5" y2="538.5" stroke="#e02840" stroke-width="1"/>
<line x1="483.5" y1="530" x2="483.5" y2="538.5" stroke="#e02840" stroke-width="1"/>
<line x1="485.5" y1="530" x2="485.5" y2="538.5" stroke="#e02840" stroke-width="1"/>
<rect x="507" y="530" width="6.00" height="8.50" fill="#f0a0b4"/>
<line x1="508.5" y1="530" x2="508.5" y2="538.5" stroke="#e02840" stroke-width="1"/>
<line x1="510.5" y1="530" x2="510.5" y2="538.5" stroke="#e02840" stroke-width="1"/>
<line x1="512.5" y1="530" x2="512.5" y2="538.5" stroke="#e02840" stroke-width="1"/>
<rect x="581" y="530" width="6.00" height="8.50" fill="#f0a0b4"/>
<line x1="582.5" y1="530" x2="582.5" y2="538.5" stroke="#e02840" stroke-width="1"/>
<line x1="584.5" y1="530" x2="584.5" y2="538.5" stroke="#e02840" stroke-width="1"/>
<line x1="586.5" y1="530" x2="586.5" y2="538.5" stroke="#e02840" stroke-width="1"/>
<rect x="609" y="530" width="6.00" height="8.50" fill="#f0a0b4"/>
<line x1="610.5" y1="530" x2="610.5" y2="538.5" stroke="#e02840" stroke-width="1"/>
<line x1="612.5" y1="530" x2="612.5" y2="538.5" stroke="#e02840" stroke-width="1"/>
<line x1="614.5" y1="530" x2="614.5" y2="538.5" stroke="#e02840" stroke-width="1"/>
<rect x="668" y="530" width="6.00" height="8.50" fill="#f0a0b4"/>
<line x1="669.5" y1="530" x2="669.5" y2="538.5" stroke="#e02840" stroke-width="1"/>
<line x1="671.5" y1="530" x2="671.5" y2="538.5" stroke="#e02840" stroke-width="1"/>
<line x1="673.5" y1="530" x2="673.5" y2="538.5" stroke="#e02840" stroke-width="1"/>
<rect x="694" y="530" width="6.00" height="8.50" fill="#f0a0b4"/>
<line x1="695.5" y1="530" x2="695.5" y2="538.5" stroke="#e02840" stroke-width="1"/>
<line x1="697.5" y1="530" x2="697.5" y2="538.5" stroke="#e02840" stroke-width="1"/>
<line x1="699.5" y1="530" x2="699.5" y2="538.5" stroke="#e02840" stroke-width="1"/>
<rect x="769" y="530" width="6.00" height="8.50" fill="#f0a0b4"/>
<line x1="770.5" y1="530" x2="770.5" y2="538.5" stroke="#e02840" stroke-width="1"/>
<line x1="772.5" y1="530" x2="772.5" y2="538.5" stroke="#e02840" stroke-width="1"/>
<line x1="774.5" y1="530" x2="774.5" y2="538.5" stroke="#e02840" stroke-width="1"/>
<rect x="796" y="530" width="6.00" height="8.50" fill="#f0a0b4"/>
<line x1="797.5" y1="530" x2="797.5" y2="538.5" stroke="#e02840" stroke-width="1"/>
<line x1="799.5" y1="530" x2="799.5" y2="538.5" stroke="#e02840" stroke-width="1"/>
<line x1="801.5" y1="530" x2="801.5" y2="538.5" stroke="#e02840" stroke-width="1"/>
<rect x="871" y="530" width="6.00" height="8.50" fill="#f0a0b4"/>
<line x1="872.5" y1="530" x2="872.5" y2="538.5" stroke="#e02840" stroke-width="1"/>
<line x1="874.5" y1="530" x2="874.5" y2="538.5" stroke="#e02840" stroke-width="1"/>
<line x1="876.5" y1="530" x2="876.5" y2="538.5" stroke="#e02840" stroke-width="1"/>
<rect x="898" y="530" width="6.00" height="8.50" fill="#f0a0b4"/>
<line x1="899.5" y1="530" x2="899.5" y2="538.5" stroke="#e02840" stroke-width="1"/>
<line x1="901.5" y1="530" x2="901.5" y2="538.5" stroke="#e02840" stroke-width="1"/>
<line x1="903.5" y1="530" x2="903.5" y2="538.5" stroke="#e02840" stroke-width="1"/>
<rect x="957" y="530" width="6.00" height="8.50" fill="#f0a0b4"/>
<line x1="958.5" y1="530" x2="958.5" y2="538.5" stroke="#e02840" stroke-width="1"/>
<line x1="960.5" y1="530" x2="960.5" y2="538.5" stroke="#e02840" stroke-width="1"/>
<line x1="962.5" y1="530" x2="962.5" y2="538.5" stroke="#e02840" stroke-width="1"/>
<rect x="984" y="530" width="6.00" height="8.50" fill="#f0a0b4"/>
<line x1="985.5" y1="530" x2="985.5" y2="538.5" stroke="#e02840" stroke-width="1"/>
<line x1="987.5" y1="530" x2="987.5" y2="538.5" stroke="#e02840" stroke-width="1"/>
<line x1="989.5" y1="530" x2="989.5" y2="538.5" stroke="#e02840" stroke-width="1"/>
<rect x="1058" y="530" width="6.00" height="8.50" fill="#f0a0b4"/>
<line x1="1059.5" y1="530" x2="1059.5" y2="538.5" stroke="#e02840" stroke-width="1"/>
<line x1="1061.5" y1="530" x2="1061.5" y2="538.5" stroke="#e02840" stroke-width="1"/>
<line x1="1063.5" y1="530" x2="1063.5" y2="538.5" stroke="#e02840" stroke-width="1"/>
<rect x="925.5" y="198" width="9.50" height="6.00" fill="#f0a0b4"/>
<line x1="925.5" y1="199.5" x2="935" y2="199.5" stroke="#e02840" stroke-width="1"/>
<line x1="925.5" y1="201.5" x2="935" y2="201.5" stroke="#e02840" stroke-width="1"/>
<line x1="925.5" y1="203.5" x2="935" y2="203.5" stroke="#e02840" stroke-width="1"/>
<rect x="925.5" y="231" width="9.50" height="6.00" fill="#f0a0b4"/>
<line x1="925.5" y1="232.5" x2="935" y2="232.5" stroke="#e02840" stroke-width="1"/>
<line x1="925.5" y1="234.5" x2="935" y2="234.5" stroke="#e02840" stroke-width="1"/>
<line x1="925.5" y1="236.5" x2="935" y2="236.5" stroke="#e02840" stroke-width="1"/>
<polyline points="417.5,130.0 428,126.5 469,126.5" fill="none" stroke="#ececec" stroke-width="1"/>
<text x="428" y="123.3" fill="#ececec" font-size="10.3" font-family="Liberation Sans">0;6</text>
<polyline points="487.0,130.0 497.5,126.5 538.5,126.5" fill="none" stroke="#ececec" stroke-width="1"/>
<text x="497.5" y="123.3" fill="#ececec" font-size="10.3" font-family="Liberation Sans">0;6</text>
<polyline points="775.0,130.0 785.5,126.5 826.5,126.5" fill="none" stroke="#ececec" stroke-width="1"/>
<text x="785.5" y="123.3" fill="#ececec" font-size="10.3" font-family="Liberation Sans">0;6</text>
<polyline points="1065.0,130.0 1075.5,126.5 1116.5,126.5" fill="none" stroke="#ececec" stroke-width="1"/>
<text x="1075.5" y="123.3" fill="#ececec" font-size="10.3" font-family="Liberation Sans">0;6</text>
<polyline points="876.5,429.0 887,424.5 928,424.5" fill="none" stroke="#ececec" stroke-width="1"/>
<text x="887" y="422.3" fill="#ececec" font-size="10.3" font-family="Liberation Sans">0;6</text>
<polyline points="964.5,429.0 975,424.5 1016,424.5" fill="none" stroke="#ececec" stroke-width="1"/>
<text x="975" y="422.3" fill="#ececec" font-size="10.3" font-family="Liberation Sans">0;6</text>
<polyline points="1065.0,429.0 1075.5,424.5 1116.5,424.5" fill="none" stroke="#ececec" stroke-width="1"/>
<text x="1075.5" y="422.3" fill="#ececec" font-size="10.3" font-family="Liberation Sans">0;6</text>
<polyline points="487.0,530.5 497.5,526.5 538.5,526.5" fill="none" stroke="#ececec" stroke-width="1"/>
<text x="497.5" y="523.8" fill="#ececec" font-size="10.3" font-family="Liberation Sans">0;6</text>
<polyline points="586.5,530.5 597,526.5 638,526.5" fill="none" stroke="#ececec" stroke-width="1"/>
<text x="597" y="523.8" fill="#ececec" font-size="10.3" font-family="Liberation Sans">0;6</text>
<polyline points="672.5,530.5 683,526.5 724,526.5" fill="none" stroke="#ececec" stroke-width="1"/>
<text x="683" y="523.8" fill="#ececec" font-size="10.3" font-family="Liberation Sans">0;6</text>
<polyline points="775.0,530.5 785.5,526.5 826.5,526.5" fill="none" stroke="#ececec" stroke-width="1"/>
<text x="785.5" y="523.8" fill="#ececec" font-size="10.3" font-family="Liberation Sans">0;6</text>
<polyline points="876.5,530.5 887,526.5 928,526.5" fill="none" stroke="#ececec" stroke-width="1"/>
<text x="887" y="523.8" fill="#ececec" font-size="10.3" font-family="Liberation Sans">0;6</text>
<polyline points="962.5,530.5 973,526.5 1014,526.5" fill="none" stroke="#ececec" stroke-width="1"/>
<text x="973" y="523.8" fill="#ececec" font-size="10.3" font-family="Liberation Sans">0;6</text>
<polyline points="1065.0,530.5 1075.5,526.5 1116.5,526.5" fill="none" stroke="#ececec" stroke-width="1"/>
<text x="1075.5" y="523.8" fill="#ececec" font-size="10.3" font-family="Liberation Sans">0;6</text>
<line x1="386.5" y1="176" x2="386.5" y2="191" stroke="#ececec" stroke-width="1"/>
<line x1="631.5" y1="177" x2="631.5" y2="191" stroke="#ececec" stroke-width="1"/>
<polyline points="920,176 920,205 925,214" fill="none" stroke="#ececec" stroke-width="1.1"/>
<text transform="translate(918,215) rotate(-90)" fill="#ececec" font-size="10.3" font-family="Liberation Sans">0;6</text>
<circle cx="394.5" cy="94.8" r="7.4" fill="#000" stroke="#3f6a3f" stroke-width="1"/>
<text x="394.5" y="98.89999999999999" fill="#e4e4e4" font-size="11.3" text-anchor="middle" font-family="Liberation Sans">1</text>
<circle cx="394.5" cy="681.6" r="7.4" fill="#000" stroke="#3f6a3f" stroke-width="1"/>
<text x="394.5" y="685.7" fill="#e4e4e4" font-size="11.3" text-anchor="middle" font-family="Liberation Sans">1</text>
<circle cx="497.5" cy="94.8" r="7.4" fill="#000" stroke="#3f6a3f" stroke-width="1"/>
<text x="497.5" y="98.89999999999999" fill="#e4e4e4" font-size="11.3" text-anchor="middle" font-family="Liberation Sans">2</text>
<circle cx="497.5" cy="681.6" r="7.4" fill="#000" stroke="#3f6a3f" stroke-width="1"/>
<text x="497.5" y="685.7" fill="#e4e4e4" font-size="11.3" text-anchor="middle" font-family="Liberation Sans">2</text>
<circle cx="641.5" cy="94.8" r="7.4" fill="#000" stroke="#3f6a3f" stroke-width="1"/>
<text x="641.5" y="98.89999999999999" fill="#e4e4e4" font-size="11.3" text-anchor="middle" font-family="Liberation Sans">3</text>
<circle cx="641.5" cy="681.6" r="7.4" fill="#000" stroke="#3f6a3f" stroke-width="1"/>
<text x="641.5" y="685.7" fill="#e4e4e4" font-size="11.3" text-anchor="middle" font-family="Liberation Sans">3</text>
<circle cx="785.5" cy="94.8" r="7.4" fill="#000" stroke="#3f6a3f" stroke-width="1"/>
<text x="785.5" y="98.89999999999999" fill="#e4e4e4" font-size="11.3" text-anchor="middle" font-family="Liberation Sans">4</text>
<circle cx="785.5" cy="681.6" r="7.4" fill="#000" stroke="#3f6a3f" stroke-width="1"/>
<text x="785.5" y="685.7" fill="#e4e4e4" font-size="11.3" text-anchor="middle" font-family="Liberation Sans">4</text>
<circle cx="930.5" cy="94.8" r="7.4" fill="#000" stroke="#3f6a3f" stroke-width="1"/>
<text x="930.5" y="98.89999999999999" fill="#e4e4e4" font-size="11.3" text-anchor="middle" font-family="Liberation Sans">5</text>
<circle cx="930.5" cy="681.6" r="7.4" fill="#000" stroke="#3f6a3f" stroke-width="1"/>
<text x="930.5" y="685.7" fill="#e4e4e4" font-size="11.3" text-anchor="middle" font-family="Liberation Sans">5</text>
<circle cx="1075.5" cy="94.8" r="7.4" fill="#000" stroke="#3f6a3f" stroke-width="1"/>
<text x="1075.5" y="98.89999999999999" fill="#e4e4e4" font-size="11.3" text-anchor="middle" font-family="Liberation Sans">6</text>
<circle cx="1075.5" cy="681.6" r="7.4" fill="#000" stroke="#3f6a3f" stroke-width="1"/>
<text x="1075.5" y="685.7" fill="#e4e4e4" font-size="11.3" text-anchor="middle" font-family="Liberation Sans">6</text>
<circle cx="341.8" cy="133.4" r="7.4" fill="#000" stroke="#3f6a3f" stroke-width="1"/>
<text x="341.8" y="137.5" fill="#e4e4e4" font-size="11.3" text-anchor="middle" font-family="Liberation Sans">D</text>
<circle cx="341.8" cy="535.4" r="7.4" fill="#000" stroke="#3f6a3f" stroke-width="1"/>
<text x="341.8" y="539.5" fill="#e4e4e4" font-size="11.3" text-anchor="middle" font-family="Liberation Sans">A</text>
<line x1="388" y1="587.5" x2="1080" y2="587.5" stroke="#3f6a3f" stroke-width="1"/>
<line x1="396" y1="638.5" x2="1080" y2="638.5" stroke="#3f6a3f" stroke-width="1"/>
<line x1="389.5" y1="592" x2="399.5" y2="582" stroke="#3f6a3f" stroke-width="1"/>
<line x1="492.5" y1="592" x2="502.5" y2="582" stroke="#3f6a3f" stroke-width="1"/>
<line x1="636.5" y1="592" x2="646.5" y2="582" stroke="#3f6a3f" stroke-width="1"/>
<line x1="780.5" y1="592" x2="790.5" y2="582" stroke="#3f6a3f" stroke-width="1"/>
<line x1="925.5" y1="592" x2="935.5" y2="582" stroke="#3f6a3f" stroke-width="1"/>
<line x1="1070.5" y1="592" x2="1080.5" y2="582" stroke="#3f6a3f" stroke-width="1"/>
<line x1="389" y1="643.5" x2="399" y2="633.5" stroke="#3f6a3f" stroke-width="1"/>
<text x="445.5" y="617.5" fill="#e0e0e0" font-size="12.5" text-anchor="middle" font-family="Liberation Sans">3000</text>
<text x="569.5" y="617.5" fill="#e0e0e0" font-size="12.5" text-anchor="middle" font-family="Liberation Sans">4200</text>
<text x="714" y="617.5" fill="#e0e0e0" font-size="12.5" text-anchor="middle" font-family="Liberation Sans">4200</text>
<text x="858" y="617.5" fill="#e0e0e0" font-size="12.5" text-anchor="middle" font-family="Liberation Sans">4200</text>
<text x="1002" y="617.5" fill="#e0e0e0" font-size="12.5" text-anchor="middle" font-family="Liberation Sans">4200</text>
<text x="930" y="669.3" fill="#e0e0e0" font-size="12.5" text-anchor="middle" font-family="Liberation Sans">31200</text>
<line x1="367.2" y1="651" x2="367.2" y2="640" stroke="#30d030" stroke-width="3"/>
<polygon points="362.7,642 371.7,642 367.2,635" fill="#30d030"/>
<text x="367.2" y="634.5" fill="#30d030" font-size="10.5" text-anchor="middle" font-family="Liberation Sans">Y</text>
<line x1="370" y1="655.3" x2="381" y2="655.3" stroke="#e02828" stroke-width="3"/>
<polygon points="380,651 380,659.6 388.5,655.3" fill="#e02828"/>
<text x="391.5" y="659" fill="#e02828" font-size="10.5" text-anchor="middle" font-family="Liberation Sans">X</text>
<circle cx="367.2" cy="655.3" r="3.5" fill="#1818c0"/>
</svg>
<!-- DIALOG -->
<div class="a" style="left:292px;top:191px;width:587px;height:310px;background:#f0f0f0;border:1px solid #d2d2d2;border-top:none"></div>
<div class="a" style="left:292px;top:191px;width:587px;height:18px;background:#2c7bd8"></div>
<div class="t" style="left:298px;top:196px;color:#eaf2fc"><span class="c">编</span><span class="c">辑</span><span class="c">预</span><span class="c">制</span><span class="c">钢</span><span class="c">筋</span></div>
<div class="t" style="left:866px;top:194.5px;color:#fff;font-size:10px;font-weight:bold">×</div>
<div class="a" style="left:300px;top:217px;width:571px;height:254px;background:#fff;border:1px solid #c9c9c9"></div>
<div class="a" style="left:301px;top:218px;width:545px;height:12.5px;background:#ececec"></div>
<div class="a" style="left:680.2px;top:218px;width:34.4px;height:12.5px;background:#6aa9ea"></div>
<div class="a" style="left:301px;top:230.4px;width:545px;height:1px;background:#dadada"></div>
<div class="a" style="left:301px;top:260.0px;width:545px;height:1px;background:#dadada"></div>
<div class="a" style="left:301px;top:277.3px;width:545px;height:1px;background:#dadada"></div>
<div class="a" style="left:301px;top:293.1px;width:545px;height:1px;background:#dadada"></div>
<div class="a" style="left:315.7px;top:218px;width:1px;height:75.5px;background:#dadada"></div>
<div class="a" style="left:349.6px;top:218px;width:1px;height:75.5px;background:#dadada"></div>
<div class="a" style="left:384.8px;top:218px;width:1px;height:75.5px;background:#dadada"></div>
<div class="a" style="left:419.3px;top:218px;width:1px;height:75.5px;background:#dadada"></div>
<div class="a" style="left:576.8px;top:218px;width:1px;height:75.5px;background:#dadada"></div>
<div class="a" style="left:680.2px;top:218px;width:1px;height:75.5px;background:#dadada"></div>
<div class="a" style="left:714.6px;top:218px;width:1px;height:75.5px;background:#dadada"></div>
<div class="a" style="left:776.5px;top:218px;width:1px;height:75.5px;background:#dadada"></div>
<div class="a" style="left:845.6px;top:218px;width:1px;height:75.5px;background:#dadada"></div>
<div class="a" style="left:301px;top:231px;width:14.7px;height:46.3px;background:#ececec"></div>
<div class="a" style="left:301px;top:278.3px;width:14.7px;height:14.8px;background:#6aa9ea"></div>
<div class="t d" style="left:292.6px;width:80px;text-align:center;top:220.0px;color:#333;"><span class="c">筋</span><span class="c">号</span></div>
<div class="t d" style="left:327.2px;width:80px;text-align:center;top:220.0px;color:#333;"><span class="c">规</span><span class="c">格</span></div>
<div class="t d" style="left:362.1px;width:80px;text-align:center;top:220.0px;color:#333;"><span class="c">图</span><span class="c">号</span></div>
<div class="t d" style="left:458.0px;width:80px;text-align:center;top:220.0px;color:#333;"><span class="c">钢</span><span class="c">筋</span><span class="c">图</span><span class="c">形</span></div>
<div class="t d" style="left:588.5px;width:80px;text-align:center;top:220.0px;color:#333;"><span class="c">计</span><span class="c">算</span><span class="c">表</span><span class="c">达</span><span class="c">式</span></div>
<div class="t d" style="left:657.4px;width:80px;text-align:center;top:220.0px;color:#fff;"><span class="c">根</span><span class="c">数</span></div>
<div class="t d" style="left:705.5px;width:80px;text-align:center;top:220.0px;color:#333;"><span class="c">长</span><span class="c">度</span>(mm)</div>
<div class="t d" style="left:771.0px;width:80px;text-align:center;top:220.0px;color:#333;"><span class="c">备</span><span class="c">注</span></div>
<div class="t d" style="left:305px;top:242px;color:#666;font-size:8.7px">1</div>
<div class="t d" style="left:305px;top:264.7px;color:#666;font-size:8.7px">2</div>
<div class="t d" style="left:305px;top:281.3px;color:#fff;font-weight:bold;font-size:8.7px">3</div>
<div class="t d" style="left:317.5px;top:241.8px;color:#222;font-size:8.7px">1</div>
<svg class="a" style="left:352px;top:240.0px" width="9" height="9" viewBox="0 0 9 9"><circle cx="4.2" cy="5.2" r="2.6" fill="none" stroke="#222" stroke-width="1.2"/><line x1="4.2" y1="1.6" x2="4.2" y2="8.2" stroke="#222" stroke-width="1"/><line x1="2.2" y1="1.6" x2="6.2" y2="1.6" stroke="#222" stroke-width="1.1"/></svg>
<div class="t d" style="left:360.3px;top:241.8px;color:#222;font-size:8.7px">22</div>
<div class="t d" style="left:387.5px;top:241.8px;color:#222;font-size:8.7px">18</div>
<div class="t d" style="left:579.8px;top:241.8px;color:#222;font-size:8.7px">7140+300</div>
<div class="t d" style="left:682.5px;top:241.8px;color:#222;font-size:8.7px">2</div>
<div class="t d" style="left:717px;top:241.8px;color:#222;font-size:8.7px">7440</div>
<div class="t d" style="left:317.5px;top:264.5px;color:#222;font-size:8.7px">2</div>
<svg class="a" style="left:352px;top:262.7px" width="9" height="9" viewBox="0 0 9 9"><circle cx="4.2" cy="5.2" r="2.6" fill="none" stroke="#222" stroke-width="1.2"/><line x1="4.2" y1="1.6" x2="4.2" y2="8.2" stroke="#222" stroke-width="1"/><line x1="2.2" y1="1.6" x2="6.2" y2="1.6" stroke="#222" stroke-width="1.1"/></svg>
<div class="t d" style="left:360.3px;top:264.5px;color:#222;font-size:8.7px">22</div>
<div class="t d" style="left:387.5px;top:264.5px;color:#222;font-size:8.7px">1</div>
<div class="t d" style="left:579.8px;top:264.5px;color:#222;font-size:8.7px">5680</div>
<div class="t d" style="left:682.5px;top:264.5px;color:#222;font-size:8.7px">2</div>
<div class="t d" style="left:717px;top:264.5px;color:#222;font-size:8.7px">5680</div>
<div class="t d" style="left:431.5px;top:243.3px;color:#333;font-size:8.7px">300</div>
<div class="a" style="left:450.3px;top:240.5px;width:1.6px;height:13px;background:#333"></div>
<div class="a" style="left:450.3px;top:251.8px;width:123.4px;height:1.6px;background:#333"></div>
<div class="t d" style="left:497px;top:239.8px;color:#a83a3a;font-size:8.7px">7140</div>
<div class="a" style="left:433px;top:273.8px;width:140.7px;height:1.6px;background:#222"></div>
<div class="t d" style="left:495px;top:264.3px;color:#a83a3a;font-size:8.7px">5680</div>
<div class="a" style="left:680.2px;top:277.3px;width:34.6px;height:16px;background:#d3e3f4;border:1px solid #5a88c8"></div>
<div class="a" style="left:677px;top:276px;width:28px;height:28px;border-radius:50%;background:rgba(255,255,255,0.35)"></div>
<div class="a" style="left:683.8px;top:282px;width:14px;height:14px;border-radius:50%;background:#d66a88"></div>
<div class="a" style="left:637.8px;top:270.2px;width:32px;height:31.5px;border-radius:50%;background:#e9f00a"></div>
<svg class="a" style="left:653px;top:285px" width="10" height="13" viewBox="0 0 10 13"><path d="M1 1 L1 10 L3.5 8 L5.5 12 L7 11.3 L5 7.3 L8 7.3 Z" fill="#fff" stroke="#333" stroke-width="0.9"/></svg>
<div class="a" style="left:300px;top:475px;width:54.0px;height:17.5px;background:#fdfdfd;border:1px solid #cfcfcf;border-radius:2px;color:#333;text-align:center;line-height:15.5px;font-size:8px"><span class="c">插</span><span class="c">入</span></div>
<div class="a" style="left:358.6px;top:475px;width:53.9px;height:17.5px;background:#fdfdfd;border:1px solid #cfcfcf;border-radius:2px;color:#333;text-align:center;line-height:15.5px;font-size:8px"><span class="c">删</span><span class="c">除</span></div>
<div class="a" style="left:417.5px;top:475px;width:54.0px;height:17.5px;background:#fdfdfd;border:1px solid #cfcfcf;border-radius:2px;color:#333;text-align:center;line-height:15.5px;font-size:8px"><span class="c">识</span><span class="c">别</span><span class="c">钢</span><span class="c">筋</span><span class="c">表</span></div>
<div class="a" style="left:758px;top:475px;width:54.6px;height:17.5px;background:#2c7bd8;border-radius:2px;color:#fff;text-align:center;line-height:17.5px;font-size:8px"><span class="c">确</span><span class="c">定</span></div>
<div class="a" style="left:817.6px;top:475px;width:52.6px;height:17.5px;background:#fdfdfd;border:1px solid #cfcfcf;border-radius:2px;color:#333;text-align:center;line-height:15.5px;font-size:8px"><span class="c">取</span><span class="c">消</span></div>
<svg class="a" style="left:871px;top:492px" width="8" height="8" viewBox="0 0 8 8"><!--grip--><rect x="5" y="1" width="1.2" height="1.2" fill="#999"/><rect x="3" y="3" width="1.2" height="1.2" fill="#999"/><rect x="5" y="3" width="1.2" height="1.2" fill="#999"/><rect x="1" y="5" width="1.2" height="1.2" fill="#999"/><rect x="3" y="5" width="1.2" height="1.2" fill="#999"/><rect x="5" y="5" width="1.2" height="1.2" fill="#999"/></svg>
<!-- WM -->
<svg class="a" style="left:0;top:0;pointer-events:none" width="1080" height="681" viewBox="0 0 1080 681">
<defs><linearGradient id="sg" x1="0" y1="0" x2="0" y2="1"><stop offset="0" stop-color="#e98821"/><stop offset="0.5" stop-color="#e98821"/><stop offset="0.56" stop-color="#458aaa"/><stop offset="1" stop-color="#458aaa"/></linearGradient></defs>
<g opacity="0.185" shape-rendering="crispEdges">
<clipPath id="co"><polygon points="0,240 270,240 270,302 112,302 112,366 0,366"/></clipPath><clipPath id="cb"><polygon points="270,240 270,302 112,302 112,366 0,366 0,460 270,460"/></clipPath>
<g clip-path="url(#co)">
<text transform="translate(41,431.5) scale(1.04,1)" font-family="Liberation Sans" font-weight="bold" font-size="250" fill="#e98821">S</text>
</g>
<g clip-path="url(#cb)">
<text transform="translate(41,431.5) scale(1.04,1)" font-family="Liberation Sans" font-weight="bold" font-size="250" fill="#458aaa">S</text>
</g>
<text transform="translate(176.6,429.5) scale(1.4,1)" font-family="Liberation Sans" font-weight="bold" font-size="201" fill="#458aaa">t</text>
<text transform="translate(283.2,429.5) scale(1.16,1)" font-family="Liberation Sans" font-weight="bold" font-size="201" fill="#458aaa">a</text>
<text transform="translate(404.6,429.5) scale(1.21,1)" font-family="Liberation Sans" font-weight="bold" font-size="201" fill="#458aaa">r</text>
<text transform="translate(493.2,429.5) scale(1.18,1)" font-family="Liberation Sans" font-weight="bold" font-size="201" fill="#458aaa">t</text>
<polygon points="577.5,282.5 603.7,282.5 603.7,428.5 571,428.5 577.5,406" fill="#458aaa"/>
<polygon points="935.8,279.4 955,279.4 962,305 942,305" fill="#458aaa"/>
<polygon points="968,279.4 986,279.4 992,305 974,305" fill="#458aaa"/>
<polygon points="1040,279.4 1061,279.4 1046,307 1025,307" fill="#458aaa"/>
<polygon points="1038,359 1014,359 978,381 1004,381" fill="#458aaa"/>
<rect x="603.7" y="282.5" width="114.8" height="20.0" fill="#458aaa"/>
<rect x="603.7" y="310" width="113.3" height="18.7" fill="#458aaa"/>
<rect x="692.3" y="302.5" width="24.7" height="56.1" fill="#458aaa"/>
<rect x="603.7" y="338.6" width="113.3" height="20.0" fill="#458aaa"/>
<rect x="608.7" y="364.9" width="109.8" height="22.4" fill="#458aaa"/>
<rect x="608.7" y="407.3" width="109.8" height="21.2" fill="#458aaa"/>
<rect x="608.7" y="387.3" width="26.2" height="20.0" fill="#458aaa"/>
<rect x="692.3" y="387.3" width="26.2" height="20.0" fill="#458aaa"/>
<rect x="745.6" y="283" width="68.1" height="20.0" fill="#458aaa"/>
<rect x="789" y="278.5" width="24.7" height="4.5" fill="#458aaa"/>
<rect x="745.6" y="312.6" width="68.1" height="21.1" fill="#458aaa"/>
<rect x="767.9" y="283" width="25.8" height="146.0" fill="#458aaa"/>
<rect x="744.4" y="340.8" width="18.8" height="82.2" fill="#458aaa"/>
<rect x="797.3" y="340.8" width="15.2" height="78.7" fill="#458aaa"/>
<rect x="818.6" y="281" width="73.4" height="20.0" fill="#458aaa"/>
<rect x="818.6" y="313.7" width="73.4" height="18.7" fill="#458aaa"/>
<rect x="818.6" y="301" width="26.2" height="12.7" fill="#458aaa"/>
<rect x="864.8" y="301" width="27.2" height="12.7" fill="#458aaa"/>
<rect x="816.5" y="341" width="75.5" height="20.5" fill="#458aaa"/>
<rect x="816.5" y="374.4" width="75.5" height="21.6" fill="#458aaa"/>
<rect x="816.5" y="407.5" width="75.5" height="21.0" fill="#458aaa"/>
<rect x="842.3" y="361.5" width="27.7" height="46.0" fill="#458aaa"/>
<rect x="919.4" y="305" width="145.6" height="22.6" fill="#458aaa"/>
<rect x="919.4" y="327.6" width="25.6" height="20.0" fill="#458aaa"/>
<rect x="1038" y="327.6" width="27.0" height="20.0" fill="#458aaa"/>
<rect x="945" y="340.5" width="93.0" height="18.8" fill="#458aaa"/>
<rect x="917" y="382.8" width="148.0" height="18.8" fill="#458aaa"/>
<rect x="978" y="378" width="26.0" height="42.4" fill="#458aaa"/>
<rect x="965" y="411" width="13.0" height="9.4" fill="#458aaa"/>
</g></svg>
</body></html>
